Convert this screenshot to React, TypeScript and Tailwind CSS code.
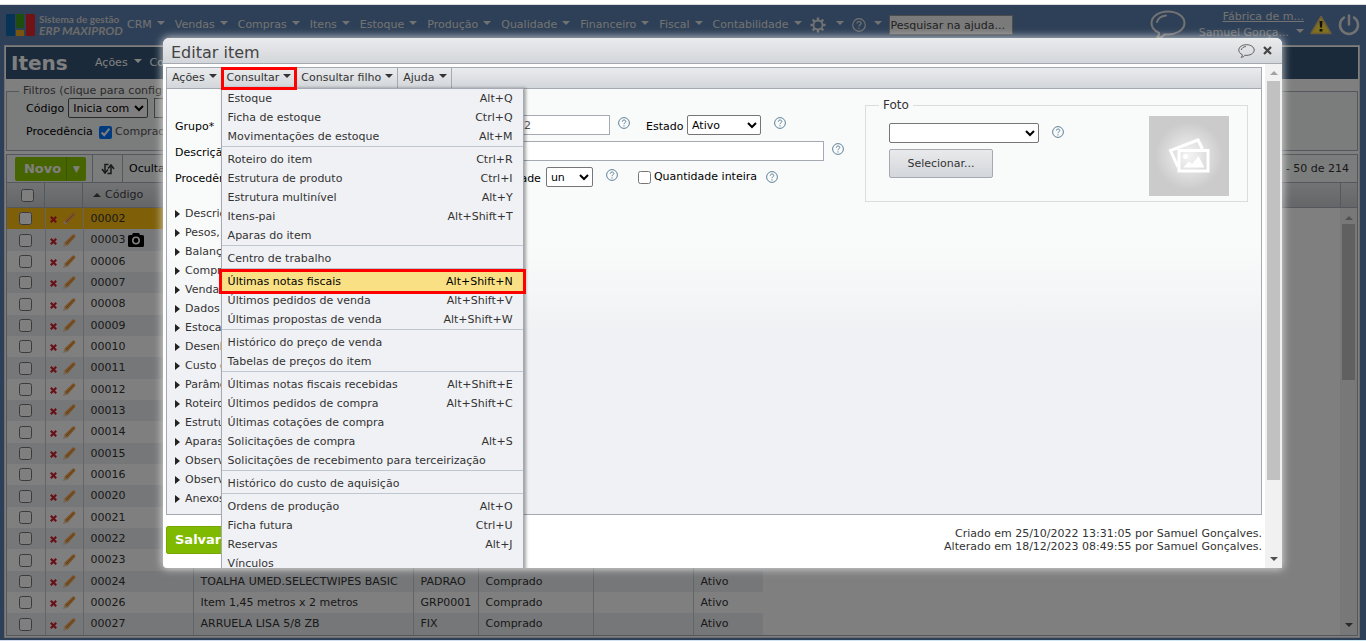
import type { ReactNode } from 'react';

type MenuEntry = { label: string; keys?: string; active?: boolean };

const navItems = [
  'CRM',
  'Vendas',
  'Compras',
  'Itens',
  'Estoque',
  'Produção',
  'Qualidade',
  'Financeiro',
  'Fiscal',
  'Contabilidade',
];

const menuGroups: MenuEntry[][] = [
  [
    { label: 'Estoque', keys: 'Alt+Q' },
    { label: 'Ficha de estoque', keys: 'Ctrl+Q' },
    { label: 'Movimentações de estoque', keys: 'Alt+M' },
  ],
  [
    { label: 'Roteiro do item', keys: 'Ctrl+R' },
    { label: 'Estrutura de produto', keys: 'Ctrl+I' },
    { label: 'Estrutura multinível', keys: 'Alt+Y' },
    { label: 'Itens-pai', keys: 'Alt+Shift+T' },
    { label: 'Aparas do item' },
  ],
  [{ label: 'Centro de trabalho' }],
  [
    { label: 'Últimas notas fiscais', keys: 'Alt+Shift+N', active: true },
    { label: 'Últimos pedidos de venda', keys: 'Alt+Shift+V' },
    { label: 'Últimas propostas de venda', keys: 'Alt+Shift+W' },
  ],
  [{ label: 'Histórico do preço de venda' }, { label: 'Tabelas de preços do item' }],
  [
    { label: 'Últimas notas fiscais recebidas', keys: 'Alt+Shift+E' },
    { label: 'Últimos pedidos de compra', keys: 'Alt+Shift+C' },
    { label: 'Últimas cotações de compra' },
    { label: 'Solicitações de compra', keys: 'Alt+S' },
    { label: 'Solicitações de recebimento para terceirização' },
  ],
  [{ label: 'Histórico do custo de aquisição' }],
  [
    { label: 'Ordens de produção', keys: 'Alt+O' },
    { label: 'Ficha futura', keys: 'Ctrl+U' },
    { label: 'Reservas', keys: 'Alt+J' },
    { label: 'Vínculos' },
  ],
];

const sections = [
  'Descriç',
  'Pesos,',
  'Balanç',
  'Compr',
  'Vendas',
  'Dados',
  'Estoca',
  'Desenh',
  'Custo d',
  'Parâme',
  'Roteiro',
  'Estrutu',
  'Aparas',
  'Observ',
  'Observ',
  'Anexos',
];

const codes = [
  '00002', '00003', '00006', '00007', '00008', '00009', '00010', '00011', '00012', '00013',
  '00014', '00015', '00016', '00020', '00021', '00022', '00023', '00024', '00026', '00027',
];

const details: Record<string, string[]> = {
  '00024': ['TOALHA UMED.SELECTWIPES BASIC', 'PADRAO', 'Comprado', 'Ativo'],
  '00026': ['Item 1,45 metros x 2 metros', 'GRP0001', 'Comprado', 'Ativo'],
  '00027': ['ARRUELA LISA 5/8 ZB', 'FIX', 'Comprado', 'Ativo'],
};

const Caret = ({ className = '' }: { className?: string }) => (
  <svg viewBox="0 0 8 4" className={`h-1 w-2 shrink-0 fill-current ${className}`} aria-hidden="true">
    <path d="M0 0h8L4 4z" />
  </svg>
);

const HelpIcon = ({ className = 'size-3 text-[#5f8199]' }: { className?: string }) => (
  <svg viewBox="0 0 12 12" className={`shrink-0 ${className}`} fill="none" stroke="currentColor">
    <circle cx="6" cy="6" r="5.4" />
    <path d="M4.3 4.7c0-2.3 3.5-2.2 3.5-.2C7.8 5.8 6 5.7 6 7.2M6 8.3v1.2" />
  </svg>
);

const Bubble = ({ className = '', width = 1.5 }: { className?: string; width?: number }) => (
  <svg viewBox="0 0 36 30" className={className} fill="none" stroke="currentColor" strokeWidth={width}>
    <path d="M18 1.500C8.600 1.500 1.500 6.600 1.500 13c0 4.200 3 7.800 7.500 9.800.3 2.200-.6 4-2.500 5.700 4-.4 6.500-1.700 8-4.300 11 1.200 20-4 20-11.200C34.500 6.600 27.400 1.500 18 1.500z" />
    <path d="M7 12c1-3.600 4.500-6 9-6.500" strokeLinecap="round" />
  </svg>
);

const Logo = () => (
  <svg viewBox="0 0 29 22" className="h-[22px] w-[29px] shrink-0" aria-hidden="true">
    <path d="M0 0h9v22H1.500A1.500 1.500 0 0 1 0 20.500z" fill="#0d67ad" />
    <path d="M10 0h8v14h-6a2 2 0 0 1-2-2z" fill="#3f9a1c" />
    <path d="M10 16h8v6h-8z" fill="#f0a818" />
    <path d="M20 0h7.500A1.500 1.500 0 0 1 29 1.500V22h-9z" fill="#e0242c" />
  </svg>
);

const Gear = () => (
  <svg viewBox="0 0 16 16" className="size-4" fill="none" stroke="currentColor">
    <circle cx="8" cy="8" r="4.500" strokeWidth="1.800" />
    <path
      d="M8 .5v2.500M8 13v2.500M.5 8h2.500M13 8h2.500M2.700 2.700l1.800 1.800M11.500 11.500l1.800 1.800M2.700 13.300l1.800-1.800M11.500 4.500l1.800-1.800"
      strokeWidth="2.400"
    />
  </svg>
);

const Warning = () => (
  <svg viewBox="0 0 22 20" className="h-5 w-[22px]" aria-hidden="true">
    <path d="M11 1.500 21 18.500H1z" fill="#ffe23a" stroke="#d8b878" strokeWidth="1.500" strokeLinejoin="round" />
    <path d="M9.500 6h3l-.5 6.500h-2zM9.600 14h2.800v2.500H9.600z" fill="#222" />
  </svg>
);

const Power = () => (
  <svg viewBox="0 0 22 22" className="size-[22px]" fill="none" stroke="currentColor" strokeWidth="2.500" strokeLinecap="round">
    <path d="M11 1.500v9M6 3.500a9 9 0 1 0 10 0" />
  </svg>
);

const Pencil = () => (
  <svg viewBox="0 0 13 13" className="size-[13px]" aria-hidden="true">
    <path d="M1.300 8.700 9.800.6c1.200-1 3.400 1.200 2.400 2.400L4.300 11.700z" fill="#f2a34f" />
    <path d="M1.300 8.700 4.300 11.700 0 13z" fill="#e6cda4" />
    <path d="M2.800 10.200 11 2" stroke="#c9772a" strokeWidth=".8" />
  </svg>
);

const Cross = () => (
  <svg viewBox="0 0 7 7" className="mt-0.5 size-[7px]" stroke="#d3202e" strokeWidth="2.200">
    <path d="M.8.8l5.400 5.400M6.200.8.800 6.200" />
  </svg>
);

const Camera = () => (
  <svg viewBox="0 0 16 14" className="h-3.5 w-4" aria-hidden="true">
    <path d="M1.500 2H4l1-2h6l1 2h2.500A1.500 1.500 0 0 1 16 3.500v9a1.500 1.500 0 0 1-1.500 1.500h-13A1.500 1.500 0 0 1 0 12.500v-9A1.500 1.500 0 0 1 1.500 2z" />
    <circle cx="8" cy="7.500" r="3.200" fill="none" stroke="#fff" strokeWidth="1.600" />
  </svg>
);

const Refresh = () => (
  <svg viewBox="0 0 14 12" className="h-3 w-3.5" fill="none" stroke="#333" strokeWidth="1.500">
    <path d="M7.500 1.500H4v8M6.500 10.500h3.500v-8" />
    <path d="M1 6l3 4 3-3.500M7 5.500l3-3.500 3 4" />
  </svg>
);

const PhotoPlaceholder = () => (
  <div className="flex size-20 items-center justify-center bg-[radial-gradient(circle,#f4f4f4_0%,#cbcbcb_60%)]">
    <svg viewBox="0 0 42 36" className="h-9 w-[42px]" fill="none" stroke="#fff" strokeWidth="3">
      <path d="M10 29 2.500 12.500 30 2l4.500 9" />
      <path d="M11 12.500h29v20.500H11z" />
      <circle cx="17.500" cy="18.500" r="2.500" fill="#fff" stroke="none" />
      <path d="M15 29.500l6-6 3 2.500 6.500-8 6 11.500z" fill="#fff" stroke="none" />
    </svg>
  </div>
);

const TopNav = () => (
  <header className="flex h-10 items-center pl-px pr-px text-[11px] text-[#e4e4e4]">
    <Logo />
    <a href="#inicio" className="ml-1 w-[84px] whitespace-nowrap font-['Lato'] font-bold text-[#d4d4d4]">
      <span className="block text-[10px] leading-3">Sistema de gestão</span>
      <span className="block text-[12px] italic leading-3">ERP MAXIPROD</span>
    </a>
    <nav className="ml-1 flex items-center gap-2.5">
      {navItems.map((item) => (
        <button key={item} type="button" className="flex items-center gap-[5px]">
          {item}
          <Caret className="mb-1" />
        </button>
      ))}
    </nav>
    <button type="button" aria-label="Configurações" className="ml-2 flex items-center gap-2.5">
      <Gear />
      <Caret className="mb-1" />
    </button>
    <button type="button" aria-label="Ajuda" className="ml-2 flex items-center gap-2">
      <HelpIcon className="size-[14px]" />
      <Caret className="mb-1" />
    </button>
    <input
      type="text"
      aria-label="Pesquisar na ajuda"
      placeholder="Pesquisar na ajuda..."
      className="ml-[7px] h-5 w-[124px] border border-[#999] bg-[#f4f4f4] px-px text-[11px] placeholder:text-[#444]"
    />
    <div className="ml-auto flex items-center">
      <Bubble className="h-[30px] w-9" width={2} />
      <div className="w-[118px] whitespace-nowrap text-right leading-4">
        <a href="#empresa" className="block underline">Fábrica de m...</a>
        <button type="button" className="ml-auto flex items-center gap-[7px]">
          Samuel Gonça...
          <Caret className="mb-1" />
        </button>
      </div>
      <a href="#avisos" aria-label="Avisos" className="ml-1.5"><Warning /></a>
      <button type="button" aria-label="Sair" className="ml-1.5"><Power /></button>
    </div>
  </header>
);

const Filters = () => (
  <fieldset className="mx-px mt-1.5 h-[66px] border border-[#a9afb8] bg-[#f6f8f8] pl-[19px]">
    <legend className="ml-[-7px] px-1 leading-3 text-[#555]">Filtros (clique para configurar)</legend>
    <div className="mt-px flex items-center gap-1">
      <label htmlFor="codigo" className="pt-0.5">Código</label>
      <select id="codigo" className="h-5 w-20 rounded-[2px] border border-[#555] bg-white">
        <option>Inicia com</option>
      </select>
      <input type="text" aria-label="Valor do código" className="ml-0.5 h-5 w-32 border border-[#777] bg-white" />
    </div>
    <div className="mt-1.5 flex items-center">
      <span className="w-[73px]">Procedência</span>
      <label className="flex items-center gap-[3px] text-[#555]">
        <input type="checkbox" defaultChecked className="size-[13px] accent-[#0075ff]" />
        Comprado
      </label>
    </div>
  </fieldset>
);

const Toolbar = () => (
  <div className="mx-px mt-[3px] flex h-7 items-center border border-b-0 border-[#a9afb8] bg-[#f6f8f8] pl-2 pr-2">
    <button type="button" className="flex h-6 w-[71px] items-center rounded-[2px] bg-[#8dc800] text-[13px] font-bold text-white">
      <span className="w-[51px] pl-1">Novo</span>
      <span className="flex h-full flex-1 items-center justify-center border-l border-[#76a800] text-[9px]">▼</span>
    </button>
    <span className="ml-1.5 flex h-full w-[31px] items-center justify-center border-x border-[#a9afb8]">
      <Refresh />
    </span>
    <button type="button" className="ml-1.5">Ocultar</button>
    <span className="ml-auto text-[#333]">1 - 50 de 214</span>
  </div>
);

const cell = 'border-r border-[#c6cace] pl-[7px]';

const ItemsTable = () => (
  <div className="mx-px flex flex-1 flex-col border border-[#a9afb8]">
    <div className="flex h-[25px] border-b border-[#a9afb8] bg-linear-to-b from-[#e6e7ea] to-[#c9ccd1] text-[#444]">
      <div className="flex w-[38px] items-center justify-center border-r border-[#a9afb8] pl-1">
        <input type="checkbox" aria-label="Selecionar todos" className="size-[13px]" />
      </div>
      <div className="w-[38px] border-r border-[#a9afb8]" />
      <button type="button" className="flex flex-1 items-center gap-1 pl-2.5">
        <Caret className="rotate-180" />
        Código
      </button>
      <div className="w-[17px] border-l border-[#a9afb8]" />
    </div>
    <div className="flex flex-1">
      <div className="flex-1">
        <table className="w-[756px] table-fixed border-collapse text-[#333]">
          <colgroup>
            <col className="w-[38px]" />
            <col className="w-[38px]" />
            <col className="w-[110px]" />
            <col className="w-[220px]" />
            <col className="w-[65px]" />
            <col className="w-[115px]" />
            <col className="w-[100px]" />
            <col className="w-[70px]" />
          </colgroup>
          <tbody>
            {codes.map((code) => {
              const [name, group, origin, status] = details[code] ?? [];
              return (
                <tr
                  key={code}
                  className="h-[21px] leading-4 even:bg-[#eceff0] first:bg-[#ffc010] nth-[3n+2]:h-[22px]"
                >
                  <td className="border-r border-[#c6cace] pl-3">
                    <input type="checkbox" aria-label={`Selecionar ${code}`} className="block size-[13px]" />
                  </td>
                  <td className="border-r border-[#c6cace]">
                    <div className="flex items-center gap-1.5 pl-1">
                      <Cross />
                      <Pencil />
                    </div>
                  </td>
                  <td className={cell}>
                    <div className="flex items-center gap-0.5">
                      {code}
                      {code === '00003' && <Camera />}
                    </div>
                  </td>
                  <td className={cell}>{name}</td>
                  <td className={cell}>{group}</td>
                  <td className={cell}>{origin}</td>
                  <td className={cell} />
                  <td className="pl-[7px]">{status}</td>
                </tr>
              );
            })}
          </tbody>
        </table>
      </div>
      <div className="flex w-[17px] flex-col items-center bg-[#f1f1f1] pt-2 pb-2">
        <Caret className="rotate-180 text-[#a3a3a3]" />
        <div className="mt-1 h-[156px] w-[13px] bg-[#c1c1c1]" />
        <Caret className="mt-auto text-[#505050]" />
      </div>
    </div>
  </div>
);

const MenuBarButton = ({ children }: { children: ReactNode }) => (
  <button type="button" className="flex h-5 items-center gap-1 border-r border-[#a4a9b2] pl-[5px] pr-1">
    {children}
    <Caret className="mb-1" />
  </button>
);

const DropdownMenu = () => (
  <div
    role="menu"
    className="absolute left-[-1px] top-5 z-10 w-[303px] border border-[#a4a9b2] bg-[#f0f1f4] shadow-[2px_0_3px_rgba(0,0,0,0.35)]"
  >
    {menuGroups.map((group, index) => (
      <div key={index} className="border-b border-[#bfc8d2] not-first:pt-[3px]">
        {group.map(({ label, keys, active }) => (
          <button
            key={label}
            type="button"
            role="menuitem"
            className={`relative flex h-[19px] w-full items-center justify-between pl-1.5 pr-2.5 ${
              active ? 'bg-[#fae084] text-black' : ''
            }`}
          >
            <span>{label}</span>
            <span>{keys}</span>
            {active && <span className="absolute -inset-x-[3px] -inset-y-[3px] border-[3px] border-[#f00]" />}
          </button>
        ))}
      </div>
    ))}
  </div>
);

const selectClass = 'h-5 rounded-[2px] border border-[#767676] bg-white text-black';

const ItemForm = () => (
  <div className="flex pl-2 pr-[13px]">
    <div className="w-[690px] text-black">
      <div className="mt-[26px] flex h-[26px] items-start">
        <label htmlFor="grupo" className="w-[90px] pt-1">Grupo*</label>
        <select id="grupo" className={`${selectClass} w-40`} />
        <input
          type="text"
          aria-label="Código do item"
          defaultValue="00002"
          className="ml-[67px] h-5 w-[118px] border border-[#a4a9b2] bg-white px-[3px] text-[#555]"
        />
        <HelpIcon className="ml-2 mt-0.5 size-3 text-[#5f8199]" />
        <label htmlFor="estado" className="ml-4 w-[41px] pt-1">Estado</label>
        <select id="estado" className={`${selectClass} w-[74px]`}>
          <option>Ativo</option>
        </select>
        <HelpIcon className="ml-[13px] mt-0.5 size-3 text-[#5f8199]" />
      </div>
      <div className="flex h-[26px] items-start">
        <label htmlFor="descricao" className="w-[90px] pt-1">Descrição*</label>
        <input id="descricao" type="text" className="h-5 w-[559px] border border-[#a4a9b2] bg-white" />
        <HelpIcon className="ml-2 mt-0.5 size-3 text-[#5f8199]" />
      </div>
      <div className="flex h-[26px] items-start">
        <label htmlFor="procedencia" className="w-[90px] pt-1">Procedência*</label>
        <select id="procedencia" className={`${selectClass} w-40`} />
        <label htmlFor="unidade" className="ml-auto pr-[5px] pt-1">Unidade</label>
        <select id="unidade" className={`${selectClass} w-[47px]`}>
          <option>un</option>
        </select>
        <HelpIcon className="ml-[13px] mt-0.5 size-3 text-[#5f8199]" />
        <label className="ml-5 mr-[9px] flex items-center gap-[3px] pt-0.5">
          <input type="checkbox" className="size-[13px]" />
          Quantidade inteira
        </label>
        <HelpIcon className="mr-[87px] mt-1 size-3 text-[#5f8199]" />
      </div>
      <div className="mt-[11px] text-[#333]">
        {sections.map((section, index) => (
          <button key={index} type="button" className="flex h-[19px] items-center gap-[5px]">
            <svg viewBox="0 0 5 8" className="h-2 w-[5px] fill-[#222]"><path d="M0 0l5 4-5 4z" /></svg>
            {section}
          </button>
        ))}
      </div>
    </div>
    <fieldset className="mt-2.5 flex h-[103px] flex-1 items-start border border-[#dcdcdc] pl-[23px] pr-[18px]">
      <legend className="ml-[-10px] px-1 text-[12px] leading-3 text-[#333]">Foto</legend>
      <div className="pt-3">
        <div className="flex">
          <select aria-label="Foto do item" className={`${selectClass} w-[150px]`} />
          <HelpIcon className="ml-[13px] mt-[3px] size-3 text-[#5f8199]" />
        </div>
        <button
          type="button"
          className="mt-1.5 h-[29px] w-[104px] rounded-[2px] border border-[#a4a9b2] bg-linear-to-b from-[#e9eaec] to-[#d3d6da]"
        >
          Selecionar...
        </button>
      </div>
      <div className="ml-auto pt-[5px]"><PhotoPlaceholder /></div>
    </fieldset>
  </div>
);

const EditDialog = () => (
  <div
    role="dialog"
    aria-label="Editar item"
    className="absolute bottom-[73px] left-[163px] right-[84px] top-[38px] flex flex-col overflow-hidden rounded-t-md rounded-bl-sm bg-white text-[11px] text-[#333] shadow-[0_0_8px_1px_rgba(255,255,255,0.7)]"
  >
    <div className="flex h-[26px] shrink-0 items-center border-b border-[#a4a9b2] bg-linear-to-b from-[#eaebed] to-[#d3d6da] pl-2 pr-2.5">
      <h2 className="pt-1 text-[16px] text-[#444]">Editar item</h2>
      <button type="button" aria-label="Comentários" className="ml-auto text-[#555]">
        <Bubble className="h-[14px] w-[17px]" width={2} />
      </button>
      <button type="button" aria-label="Fechar" className="ml-2">
        <svg viewBox="0 0 9 9" className="size-[9px]" stroke="#444" strokeWidth="2.200"><path d="M1 1l7 7M8 1L1 8" /></svg>
      </button>
    </div>
    <div className="flex min-h-0 flex-1">
      <div className="flex-1 pl-[3px] pr-[3px] pt-[3px]">
        <div className="h-[448px] border border-[#a4a9b2] bg-linear-to-b from-[#f9fbfa] from-40% to-[#f0f1f4] to-60%">
          <div className="flex h-[21px] border-b border-[#a4a9b2] bg-linear-to-b from-[#eaebed] to-[#d3d6da]">
            <MenuBarButton>Ações</MenuBarButton>
            <div className="relative">
              <MenuBarButton>Consultar</MenuBarButton>
              <DropdownMenu />
              <span className="pointer-events-none absolute -inset-x-px -top-px z-20 h-[23px] border-[3px] border-[#f00]" />
            </div>
            <MenuBarButton>Consultar filho</MenuBarButton>
            <MenuBarButton>Ajuda</MenuBarButton>
          </div>
          <ItemForm />
        </div>
        <div className="mt-[11px] flex items-start justify-between">
          <button type="button" className="h-7 w-[90px] rounded-[2px] border border-[#76a800] bg-[#80ba00] pl-2 text-left text-[13px] font-bold text-white">
            Salvar
          </button>
          <p className="pt-px text-right leading-[13px]">
            Criado em 25/10/2022 13:31:05 por Samuel Gonçalves.
            <br />
            Alterado em 18/12/2023 08:49:55 por Samuel Gonçalves.
          </p>
        </div>
      </div>
      <div className="flex w-[17px] flex-col items-center bg-[#f1f1f1] pt-[7px] pb-[7px]">
        <Caret className="rotate-180 text-[#a3a3a3]" />
        <div className="mt-1.5 h-[399px] w-[13px] bg-[#c1c1c1]" />
        <Caret className="mt-auto text-[#505050]" />
      </div>
    </div>
  </div>
);

export default function App() {
  return (
    <div className="relative flex h-screen flex-col overflow-hidden bg-white font-['DejaVu_Sans',sans-serif] text-[11px] leading-4">
      <div className="h-[5px] shrink-0 border-b border-[#ddd]" />
      <div className="relative flex flex-1 flex-col bg-[#5c80ae] px-[5px] pb-0.5">
        <TopNav />
        <main className="mr-px -ml-px flex flex-1 flex-col border border-[#ddd] bg-white pb-px">
          <div className="mx-px mt-px flex h-8 items-center bg-[#345474] pl-[5px] text-white">
            <h1 className="w-[84px] text-[20px] font-bold">Itens</h1>
            <button type="button" className="flex items-center gap-1.5">
              Ações
              <Caret className="mb-1" />
            </button>
            <button type="button" className="ml-2">Consultar</button>
          </div>
          <Filters />
          <Toolbar />
          <ItemsTable />
        </main>
        <div className="absolute inset-0 bg-black/50" />
      </div>
      <div className="h-[3px] shrink-0 bg-linear-to-r from-[#d4dcf0] to-[#cfeaf4]" />
      <EditDialog />
    </div>
  );
}
